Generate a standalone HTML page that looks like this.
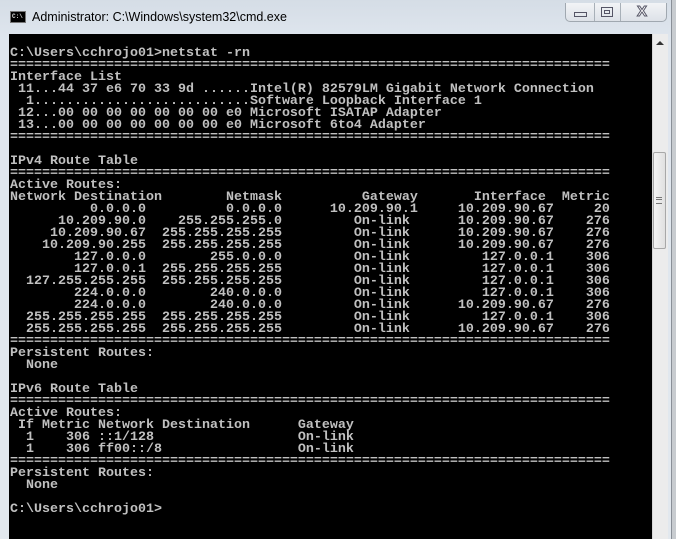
<!DOCTYPE html>
<html><head><meta charset="utf-8"><style>
html,body{margin:0;padding:0;}
body{width:676px;height:539px;position:relative;overflow:hidden;background:#e4e8ec;font-family:"Liberation Sans",sans-serif;}
.frame{position:absolute;left:0;top:0;width:671px;height:539px;background:linear-gradient(#d5dde6,#dfe6ee 40px,#e2e8ee);border-right:1px solid #8a9098;}
.right{position:absolute;left:672px;top:0;width:4px;height:539px;background:#c8ccd0;}
.title{position:absolute;left:32px;top:10px;font-size:12.5px;color:#000;}
.icon{position:absolute;left:10px;top:11px;width:16px;height:12px;background:#000;border:1px solid #777;box-sizing:border-box;}
.icon span{position:absolute;left:1px;top:1px;color:#ddd;font:bold 6px "Liberation Mono",monospace;}
.btns{position:absolute;left:565px;top:3px;width:102px;height:19px;border:1px solid #a0a8b0;border-top:none;border-radius:0 0 5px 5px;background:linear-gradient(#f2f4f6,#dde2e8);box-sizing:border-box;}
.sep{position:absolute;top:0;width:1px;height:18px;background:#a8b0b8;}
.console{position:absolute;left:9px;top:34px;width:643px;height:505px;background:#000;}
pre{position:absolute;left:10px;top:48px;margin:0;font-family:"Liberation Mono",monospace;font-weight:bold;font-size:13.33px;line-height:12px;color:#c0c0c0;}
.sb{position:absolute;left:652px;top:34px;width:15px;height:505px;background:#ececec;border-left:1px solid #d8d8d8;}
.thumb{position:absolute;left:653px;top:152px;width:13px;height:97px;background:linear-gradient(90deg,#f4f4f4,#e0e0e0);border:1px solid #a8a8a8;border-radius:2px;box-sizing:border-box;}
</style></head><body>
<div class="frame"></div>
<div class="right"></div>
<div class="icon"><span>C:\</span></div>
<div class="title">Administrator: C:\Windows\system32\cmd.exe</div>
<div class="btns">
 <div class="sep" style="left:28px"></div>
 <div class="sep" style="left:54px"></div>
 <div style="position:absolute;left:8px;top:9px;width:11px;height:3px;border:1px solid #556;"></div>
 <div style="position:absolute;left:35px;top:4px;width:10px;height:8px;border:1px solid #556;"></div>
 <div style="position:absolute;left:38px;top:7px;width:4px;height:2px;border:1px solid #556;"></div>
 <div style="position:absolute;left:71px;top:0px;font:bold 15px 'Liberation Sans',sans-serif;color:#fff;-webkit-text-stroke:1px #556;">X</div>
</div>
<div class="console"></div>
<pre>C:\Users\cchrojo01&gt;netstat -rn
===========================================================================
Interface List
 11...44 37 e6 70 33 9d ......Intel(R) 82579LM Gigabit Network Connection
  1...........................Software Loopback Interface 1
 12...00 00 00 00 00 00 00 e0 Microsoft ISATAP Adapter
 13...00 00 00 00 00 00 00 e0 Microsoft 6to4 Adapter
===========================================================================

IPv4 Route Table
===========================================================================
Active Routes:
Network Destination        Netmask          Gateway       Interface  Metric
          0.0.0.0          0.0.0.0      10.209.90.1     10.209.90.67     20
      10.209.90.0    255.255.255.0         On-link      10.209.90.67    276
     10.209.90.67  255.255.255.255         On-link      10.209.90.67    276
    10.209.90.255  255.255.255.255         On-link      10.209.90.67    276
        127.0.0.0        255.0.0.0         On-link         127.0.0.1    306
        127.0.0.1  255.255.255.255         On-link         127.0.0.1    306
  127.255.255.255  255.255.255.255         On-link         127.0.0.1    306
        224.0.0.0        240.0.0.0         On-link         127.0.0.1    306
        224.0.0.0        240.0.0.0         On-link      10.209.90.67    276
  255.255.255.255  255.255.255.255         On-link         127.0.0.1    306
  255.255.255.255  255.255.255.255         On-link      10.209.90.67    276
===========================================================================
Persistent Routes:
  None

IPv6 Route Table
===========================================================================
Active Routes:
 If Metric Network Destination      Gateway
  1    306 ::1/128                  On-link
  1    306 ff00::/8                 On-link
===========================================================================
Persistent Routes:
  None

C:\Users\cchrojo01&gt;</pre>
<div class="sb"></div>
<div style="position:absolute;left:656px;top:41px;width:0;height:0;border-left:4px solid transparent;border-right:4px solid transparent;border-bottom:4px solid #333;"></div>
<div class="thumb"></div>
<div style="position:absolute;left:656px;top:197px;width:6px;height:5px;border-top:1px solid #777;border-bottom:1px solid #777;"></div>
<div style="position:absolute;left:656px;top:199px;width:6px;height:1px;background:#777;"></div>
</body></html>
